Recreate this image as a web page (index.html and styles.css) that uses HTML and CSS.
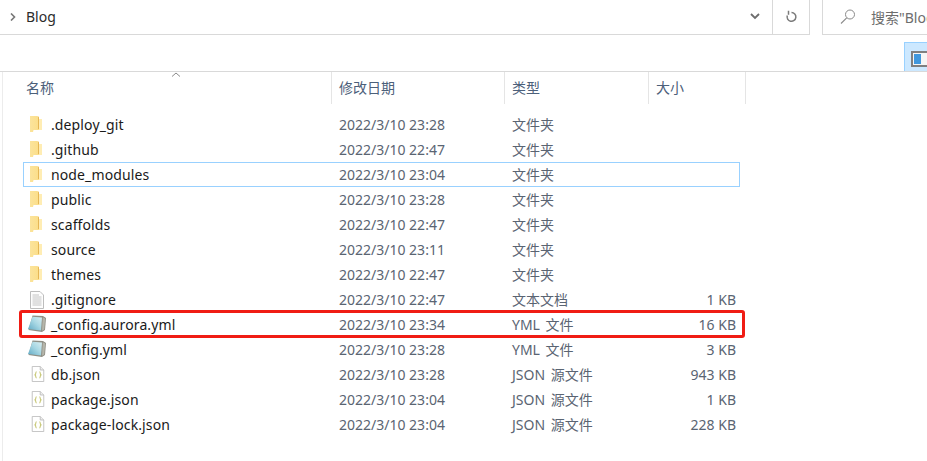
FILE: index.html
```html
<!DOCTYPE html>
<html lang="zh">
<head>
<meta charset="utf-8">
<title>Blog</title>
<link rel="stylesheet" href="styles.css">
</head>
<body>
<svg class="defs" width="0" height="0">
  <defs>
    <linearGradient id="fold" x1="0" y1="0" x2="1" y2="0">
      <stop offset="0" stop-color="#fbe49c"/>
      <stop offset="1" stop-color="#fcdc82"/>
    </linearGradient>
    <linearGradient id="sheet" x1="0" y1="1" x2="1" y2="0">
      <stop offset="0" stop-color="#5fa9c4"/>
      <stop offset=".55" stop-color="#a9d8e4"/>
      <stop offset="1" stop-color="#d8eef2"/>
    </linearGradient>
    <symbol id="folder" viewBox="0 0 14 18">
      <path d="M1 1 L8.500 1 L10 2.500 L10 4 L13 4 L13 15 L4.500 15 L4 17 L1 17 Z" fill="url(#fold)"/>
      <path d="M9 1.300 L10 2.300 L10 14 L9 14 Z" fill="#e5b755"/>
      <path d="M10 4 L13 4 L13 15 L10 15 Z" fill="#ffedb4"/>
    </symbol>
    <symbol id="doc" viewBox="0 0 14 18">
      <path d="M.5.5H10L13.500 4V17.500H.5Z" fill="#fdfdfd" stroke="#bdbdbd"/>
      <path d="M2.500 4H9M2.500 6H11.500M2.500 8H11.500M2.500 10H11.500M2.500 12H11.500M2.500 14H11.500" stroke="#c4c4c4"/>
    </symbol>
    <symbol id="note" viewBox="0 0 20 18">
      <path d="M5.500 .5 L16 1 L19 3 L18 15 L15 17 L1.500 15 Z" fill="#8f8f85"/>
      <path d="M5.500 1.800 L15 2.600 L14 15.500 L1 14 Z" fill="url(#sheet)"/>
      <path d="M15.800 2.300 L18.200 3.400 L17.200 14.600 L15 15.800 Z" fill="#b5b5aa"/>
    </symbol>
    <symbol id="json" viewBox="0 0 14 18">
      <path d="M.5.5H9.500L13.500 4.500V17.500H.5Z" fill="#fff" stroke="#bcbcbc"/>
      <path d="M9.500.5V4.500H13.500" fill="#eee" stroke="#bcbcbc"/>
      <path d="M5.500 6.500C4 6.500 4.800 9.500 3.800 10 4.800 10.500 4 13.500 5.500 13.500M8.500 6.500C10 6.500 9.200 9.500 10.200 10 9.200 10.500 10 13.500 8.500 13.500" fill="none" stroke="#c9c97a" stroke-width="1.300"/>
    </symbol>
  </defs>
</svg>

<header class="addressbar">
  <div class="path">
    <svg class="crumb" width="6" height="8" viewBox="0 0 6 8"><path d="M1 .5 4.500 4 1 7.500" fill="none" stroke="#777" stroke-width="1.600"/></svg>
    <span class="path-text">Blog</span>
    <svg class="drop" width="10" height="7" viewBox="0 0 10 7"><path d="M1 1 5 5 9 1" fill="none" stroke="#6d6d6d" stroke-width="1.800"/></svg>
  </div>
  <div class="refresh">
    <svg width="12" height="13" viewBox="0 0 12 13"><path d="M6.500 2.500A4.400 4.400 0 1 1 2.300 5.500M3.500 .8V4.800" fill="none" stroke="#7b7b7b" stroke-width="1.500"/></svg>
  </div>
  <div class="search">
    <svg class="search-ico" width="16" height="16" viewBox="0 0 16 16"><circle cx="10" cy="5.500" r="4.500" fill="none" stroke="#8a8a8a"/><path d="M6.700 8.800 1 14.500" stroke="#8a8a8a" stroke-width="1.100"/></svg>
    <span class="search-text">搜索"Blog"</span>
  </div>
</header>

<div class="toolbar">
  <div class="view-btn"><span class="view-icon"><span class="view-pane"></span></span></div>
</div>

<main class="content">
  <div class="columns">
    <div class="col col-name">名称<svg class="sort" width="10" height="5" viewBox="0 0 10 5"><path d="M1 4.500 5 1 9 4.500" fill="none" stroke="#8a8a8a"/></svg></div>
    <div class="col col-date">修改日期</div>
    <div class="col col-type">类型</div>
    <div class="col col-size">大小</div>
  </div>

  <div class="rows">
    <div class="row"><svg class="ico ico-folder"><use href="#folder"/></svg><span class="name">.deploy_git</span><span class="date">2022/3/10 23:28</span><span class="type">文件夹</span><span class="size"></span></div>
    <div class="row"><svg class="ico ico-folder"><use href="#folder"/></svg><span class="name">.github</span><span class="date">2022/3/10 22:47</span><span class="type">文件夹</span><span class="size"></span></div>
    <div class="row focused"><svg class="ico ico-folder"><use href="#folder"/></svg><span class="name">node_modules</span><span class="date">2022/3/10 23:04</span><span class="type">文件夹</span><span class="size"></span></div>
    <div class="row"><svg class="ico ico-folder"><use href="#folder"/></svg><span class="name">public</span><span class="date">2022/3/10 23:28</span><span class="type">文件夹</span><span class="size"></span></div>
    <div class="row"><svg class="ico ico-folder"><use href="#folder"/></svg><span class="name">scaffolds</span><span class="date">2022/3/10 22:47</span><span class="type">文件夹</span><span class="size"></span></div>
    <div class="row"><svg class="ico ico-folder"><use href="#folder"/></svg><span class="name">source</span><span class="date">2022/3/10 23:11</span><span class="type">文件夹</span><span class="size"></span></div>
    <div class="row"><svg class="ico ico-folder"><use href="#folder"/></svg><span class="name">themes</span><span class="date">2022/3/10 22:47</span><span class="type">文件夹</span><span class="size"></span></div>
    <div class="row"><svg class="ico"><use href="#doc"/></svg><span class="name">.gitignore</span><span class="date">2022/3/10 22:47</span><span class="type">文本文档</span><span class="size">1 KB</span></div>
    <div class="row marked"><svg class="ico ico-wide"><use href="#note"/></svg><span class="name">_config.aurora.yml</span><span class="date">2022/3/10 23:34</span><span class="type">YML 文件</span><span class="size">16 KB</span></div>
    <div class="row"><svg class="ico ico-wide"><use href="#note"/></svg><span class="name">_config.yml</span><span class="date">2022/3/10 23:28</span><span class="type">YML 文件</span><span class="size">3 KB</span></div>
    <div class="row"><svg class="ico ico-json"><use href="#json"/></svg><span class="name">db.json</span><span class="date">2022/3/10 23:28</span><span class="type">JSON 源文件</span><span class="size">943 KB</span></div>
    <div class="row"><svg class="ico ico-json"><use href="#json"/></svg><span class="name">package.json</span><span class="date">2022/3/10 23:04</span><span class="type">JSON 源文件</span><span class="size">1 KB</span></div>
    <div class="row"><svg class="ico ico-json"><use href="#json"/></svg><span class="name">package-lock.json</span><span class="date">2022/3/10 23:04</span><span class="type">JSON 源文件</span><span class="size">228 KB</span></div>
  </div>
</main>
</body>
</html>
```

FILE: styles.css
```css
* { box-sizing: border-box; }
html, body { margin: 0; height: 100%; }
body {
  width: 927px;
  height: 461px;
  overflow: hidden;
  background: #fff;
  font-family: "Noto Sans", "Noto Sans CJK SC", sans-serif;
  font-size: 14px;
  color: #1f1f1f;
}
.defs { position: absolute; }

.addressbar {
  display: flex;
  height: 35px;
}
.path {
  display: flex;
  align-items: center;
  width: 773px;
  padding: 0 0 1px 10px;
  border-bottom: 1px solid #d9d9d9;
  border-right: 1px solid #d9d9d9;
}
.path-text { margin-left: 10px; flex: 1; color: #2b2b2b; }
.drop { margin-right: 12px; }
.refresh {
  display: flex;
  align-items: center;
  justify-content: center;
  width: 37px;
  padding-bottom: 1px;
  border-bottom: 1px solid #d9d9d9;
  border-right: 1px solid #d9d9d9;
}
.search {
  display: flex;
  align-items: center;
  flex: 1;
  margin-left: 12px;
  padding: 0 0 1px 17px;
  border-left: 1px solid #d9d9d9;
  border-bottom: 1px solid #d9d9d9;
  white-space: nowrap;
  overflow: hidden;
}
.search-ico { flex: none; }
.search-text { margin-left: 15px; color: #6d6d6d; }

.toolbar {
  display: flex;
  justify-content: flex-end;
  align-items: flex-end;
  height: 36px;
}
.view-btn {
  width: 23px;
  height: 29px;
  padding: 8px 0 0 6px;
  background: #cce8ff;
  border: 1px solid #99d1ff;
  border-right: 0;
  border-bottom: 0;
}
.view-icon {
  display: block;
  width: 20px;
  height: 16px;
  padding: 1px 0 1px 1px;
  background: #f5f5f5;
  border: 2px solid #7f7f7f;
  border-right: 0;
}
.view-pane { display: block; width: 7px; height: 100%; background: #3f97dd; }

.content {
  height: 390px;
  border-top: 1px solid #d9d9d9;
  position: relative;
}
.content::before {
  content: "";
  display: block;
  position: absolute;
  left: 2px;
  top: 0;
  bottom: 0;
  width: 1px;
  background: #ececec;
}
.columns {
  display: grid;
  grid-template-columns: 332px 173px 144px 97px;
  height: 32px;
}
.col {
  position: relative;
  display: flex;
  align-items: center;
  padding: 0 0 2px 7px;
  color: #4c607a;
  border-right: 1px solid #e5e5e5;
}
.col-name { padding-left: 26px; }
.col-type { padding-left: 7px; }
.sort { position: absolute; left: 171px; top: 0; }

.rows { padding: 8px 0 0 23px; }
.row {
  display: grid;
  grid-template-columns: 27px 288px 173px 121px 103px;
  align-items: center;
  width: 717px;
  height: 25px;
  line-height: 20px;
  position: relative;
  border: 1px solid transparent;
}
.row.focused { border-color: #99d1ff; }
.row.marked::after {
  content: "";
  position: absolute;
  left: -5px;
  right: -6px;
  top: -3px;
  bottom: -2px;
  border: 3px solid #f01c14;
  border-radius: 3px;
  pointer-events: none;
}
.ico { width: 14px; height: 18px; margin-left: 6px; }
.ico-folder { height: 18px; margin: -2px 0 0 5px; }
.ico-json { height: 16px; margin: -1px 0 0 7px; }
.ico-wide { width: 20px; margin: -1px 0 0 3px; }
.name { color: #1a1a1a; white-space: nowrap; letter-spacing: .12px; }
.date, .type, .size { color: #5a6472; white-space: nowrap; }
.type { word-spacing: 2px; }
.size { text-align: right; }
```
